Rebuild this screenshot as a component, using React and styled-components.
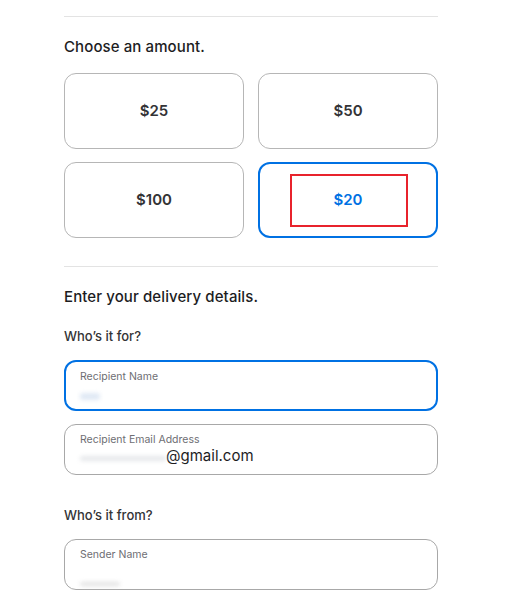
import React from 'react';
import styled, { createGlobalStyle } from 'styled-components';

const GlobalStyle = createGlobalStyle`
  body {
    margin: 0;
    background: #ffffff;
    font-family: Inter, "Liberation Sans", Arial, sans-serif;
    color: #1d1d1f;
  }
`;

const Page = styled.div`
  width: 374px;
  padding: 16px 0 0 64px;
`;

const Divider = styled.hr`
  border: none;
  height: 1px;
  background: #e3e3e3;
  margin: ${(p) => p.$top || 0}px 0 0 0;
`;

const Heading = styled.h2`
  margin: 20px 0 0 0;
  font-size: 15px;
  line-height: 20px;
  font-weight: 500;
  letter-spacing: 0.1px;
  color: #1d1d1f;
`;

const SubHeading = styled.h3`
  margin: ${(p) => p.$top}px 0 0 0;
  font-size: 13px;
  line-height: 18px;
  font-weight: 500;
  color: #333336;
`;

const AmountGrid = styled.div`
  margin-top: 16px;
  display: grid;
  grid-template-columns: 1fr 1fr;
  gap: 13px 14px;
`;

const AmountButton = styled.button`
  position: relative;
  height: 76px;
  box-sizing: border-box;
  background: #fff;
  border: ${(p) => (p.$selected ? '2px solid #0071e3' : '1px solid #b6b6b6')};
  border-radius: 12px;
  padding: 0 0 2px 0;
  font-family: inherit;
  font-size: 15px;
  font-weight: 600;
  color: ${(p) => (p.$selected ? '#0071e3' : '#333336')};
  cursor: pointer;
`;

const Highlight = styled.span`
  position: absolute;
  left: 30px;
  top: 10px;
  width: 118px;
  height: 53px;
  box-sizing: border-box;
  border: 2px solid #e8232c;
`;

const Field = styled.div`
  margin-top: ${(p) => p.$top}px;
  height: 51px;
  box-sizing: border-box;
  border: ${(p) => (p.$focused ? '2px solid #0071e3' : '1px solid #a8a8a8')};
  border-radius: 12px;
  padding: ${(p) => (p.$focused ? '8px 14px' : '8px 15px')};
  display: flex;
  flex-direction: column;
`;

const FieldLabel = styled.span`
  font-size: 10.5px;
  line-height: 14px;
  color: #6e6e73;
`;

const FieldValue = styled.span`
  display: flex;
  align-items: center;
  font-size: 15px;
  line-height: 18px;
  color: #1d1d1f;
`;

const Blur = styled.span`
  display: inline-block;
  width: ${(p) => p.$w}px;
  height: ${(p) => p.$h || 6}px;
  margin-top: ${(p) => p.$dy || 0}px;
  background: ${(p) => p.$color || '#e6e8eb'};
  filter: blur(2px);
  border-radius: 3px;
`;

export default function App() {
  const amounts = [
    { label: '$25' },
    { label: '$50' },
    { label: '$100' },
    { label: '$20', selected: true },
  ];

  return (
    <>
      <GlobalStyle />
      <Page>
        <Divider />
        <Heading>Choose an amount.</Heading>
        <AmountGrid>
          {amounts.map((a) => (
            <AmountButton key={a.label} $selected={a.selected}>
              {a.label}
              {a.selected && <Highlight />}
            </AmountButton>
          ))}
        </AmountGrid>
        <Divider $top={28} />
        <Heading>Enter your delivery details.</Heading>
        <SubHeading $top={20}>Who’s it for?</SubHeading>
        <Field $top={15} $focused>
          <FieldLabel>Recipient Name</FieldLabel>
          <FieldValue>
            <Blur $w={20} $h={7} $dy={9} $color="#dfe8f4" />
          </FieldValue>
        </Field>
        <Field $top={13}>
          <FieldLabel>Recipient Email Address</FieldLabel>
          <FieldValue>
            <Blur $w={86} $h={5} $dy={4} />
            <span>@gmail.com</span>
          </FieldValue>
        </Field>
        <SubHeading $top={31}>Who’s it from?</SubHeading>
        <Field $top={15}>
          <FieldLabel>Sender Name</FieldLabel>
          <FieldValue>
            <Blur $w={40} $h={4} $dy={20} $color="#e2e2e2" />
          </FieldValue>
        </Field>
      </Page>
    </>
  );
}
